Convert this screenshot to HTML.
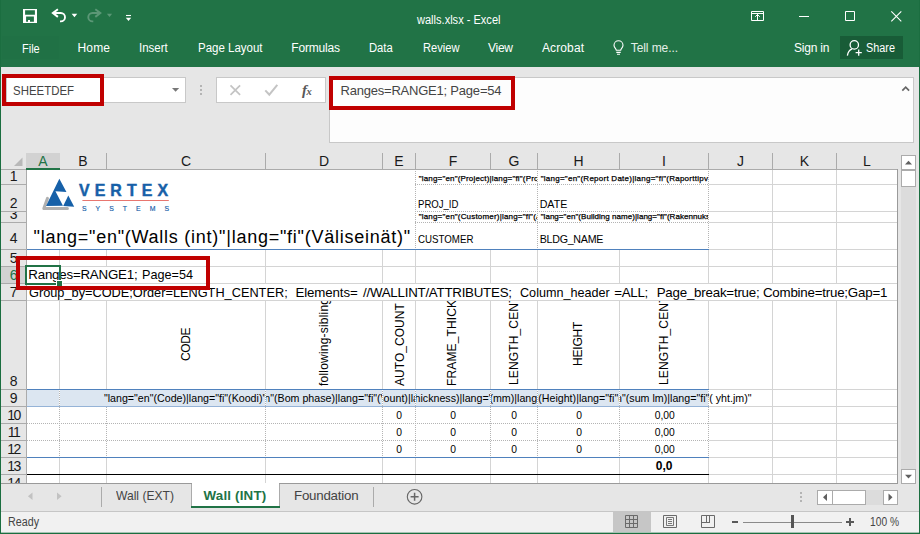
<!DOCTYPE html>
<html><head><meta charset="utf-8"><title>walls.xlsx - Excel</title>
<style>
html,body{margin:0;padding:0}
body{width:920px;height:534px;position:relative;overflow:hidden;background:#e6e6e6;font-family:"Liberation Sans",sans-serif}
.a{position:absolute;display:block}
.t{position:absolute;display:block;white-space:pre;line-height:20px}
</style></head><body>
<div class="a" style="left:0px;top:0px;width:920px;height:67px;background:#217346;"></div>
<svg class="a" style="left:0;top:0" width="160" height="34" viewBox="0 0 160 34" fill="none" stroke="#fff">
<path d="M23 9.100h14v13.800h-14z M25.100 10.200v4.600h9.800v-4.600z M26.100 16.400v5.300h1.900v-1.700h2v1.700h3.900v-5.300z" fill="#fff" fill-rule="evenodd" stroke="none"/>
<path d="M57.900 9.300 52.900 13l5 3.900" stroke-width="2" stroke-linejoin="miter"/>
<path d="M53.500 13h7.300a4.200 4.200 0 0 1 0 8.400h-.8" stroke-width="1.900"/>
<path d="M71.600 13.800h5.700l-2.850 3.500z" fill="#fff" stroke="none"/>
<g opacity=".26"><path d="M95.300 9.300l5 3.700-5 3.900" stroke-width="2"/><path d="M99.800 13h-7.300a4.200 4.200 0 0 0 0 8.400h.8" stroke-width="1.900"/>
<path d="M106.900 13.800h5.200l-2.600 3.300z" fill="#fff" stroke="none"/></g>
<path d="M126 15.500h5" stroke-width="1.100"/><path d="M125.800 17.700h5.400l-2.700 3.400z" fill="#fff" stroke="none"/>
</svg>
<span class="t" style="left:417.2px;top:9.74px;line-height:20px;font-size:12px;color:#fff;transform:scaleX(0.9208);transform-origin:0 0;">walls.xlsx - Excel</span>
<svg class="a" style="left:740px;top:0" width="180" height="34" viewBox="740 0 180 34" fill="none" stroke="#fff" stroke-width="1">
<path d="M751.5 11.5h12v9h-12z M751.5 13.5h12"/><path d="M757.5 20.5v-6.300 M755.2 16.800l2.300-2.300 2.300 2.300"/>
<path d="M799 16.5h10"/>
<path d="M845.5 11.5h9v9h-9z"/>
<path d="M891.3 11.3l10 10 M901.3 11.3l-10 10" stroke-width="1.1"/>
</svg>
<div class="a" style="left:2px;top:36px;width:57px;height:23px;background:#207145;"></div>
<span class="t" style="left:21.5px;top:38.84px;line-height:20px;font-size:12px;color:#fff;transform:scaleX(0.9180);transform-origin:0 0;">File</span>
<span class="t" style="left:77.5px;top:37.84px;line-height:20px;font-size:12px;color:#fff;letter-spacing:0.163px;">Home</span>
<span class="t" style="left:139.25px;top:37.84px;line-height:20px;font-size:12px;color:#fff;transform:scaleX(0.9580);transform-origin:0 0;">Insert</span>
<span class="t" style="left:197.5px;top:37.84px;line-height:20px;font-size:12px;color:#fff;transform:scaleX(0.9571);transform-origin:0 0;">Page Layout</span>
<span class="t" style="left:291.25px;top:37.84px;line-height:20px;font-size:12px;color:#fff;letter-spacing:-0.180px;">Formulas</span>
<span class="t" style="left:369.25px;top:37.84px;line-height:20px;font-size:12px;color:#fff;transform:scaleX(0.9370);transform-origin:0 0;">Data</span>
<span class="t" style="left:422.5px;top:37.84px;line-height:20px;font-size:12px;color:#fff;transform:scaleX(0.9277);transform-origin:0 0;">Review</span>
<span class="t" style="left:488px;top:37.84px;line-height:20px;font-size:12px;color:#fff;letter-spacing:-0.264px;">View</span>
<span class="t" style="left:542px;top:37.84px;line-height:20px;font-size:12px;color:#fff;letter-spacing:0.107px;">Acrobat</span>
<svg class="a" style="left:610px;top:38px" width="18" height="20" viewBox="610 38 18 20" fill="none" stroke="#fff" stroke-width="1.1">
<path d="M616.3 50.2c0-1.6-2.3-2.4-2.3-5a4.5 4.5 0 0 1 9 0c0 2.600-2.300 3.400-2.300 5z"/><path d="M616.300 52.400h4.400 M617 54.300h3"/></svg>
<span class="t" style="left:630.75px;top:37.84px;line-height:20px;font-size:12px;color:#e4efe8;letter-spacing:-0.079px;">Tell me...</span>
<span class="t" style="left:794px;top:37.84px;line-height:20px;font-size:12px;color:#fff;letter-spacing:-0.199px;">Sign in</span>
<div class="a" style="left:840px;top:36px;width:63px;height:23px;background:#185c37;"></div>
<svg class="a" style="left:844px;top:38px" width="20" height="20" viewBox="844 38 20 20" fill="none" stroke="#fff" stroke-width="1.3">
<circle cx="854.3" cy="44.9" r="4.2"/><path d="M847.4 55.700c.5-3.800 2.300-6 4.700-6.900"/><path d="M855.600 52.600h6.200 M858.700 49.500v6.200"/></svg>
<span class="t" style="left:866px;top:37.84px;line-height:20px;font-size:12px;color:#fff;transform:scaleX(0.9056);transform-origin:0 0;">Share</span>
<div class="a" style="left:6px;top:77px;width:180px;height:26px;background:#fff;border:1px solid #c8c8c8;box-sizing:border-box;"></div>
<span class="t" style="left:12.5px;top:81.34px;line-height:20px;font-size:12px;color:#444;transform:scaleX(0.9530);transform-origin:0 0;">SHEETDEF</span>
<svg class="a" style="left:170px;top:85px" width="12" height="10" viewBox="170 85 12 10"><path d="M172 88h7.200l-3.600 3.800z" fill="#777"/></svg>
<div class="a" style="left:200px;top:85px;width:2px;height:2px;background:#b4b4b4;"></div>
<div class="a" style="left:200px;top:89px;width:2px;height:2px;background:#b4b4b4;"></div>
<div class="a" style="left:200px;top:93px;width:2px;height:2px;background:#b4b4b4;"></div>
<div class="a" style="left:216px;top:77px;width:110px;height:26px;background:#fff;border:1px solid #c8c8c8;box-sizing:border-box;"></div>
<svg class="a" style="left:216px;top:77px" width="110" height="26" viewBox="216 77 110 26" fill="none">
<path d="M230.500 85.300l9.600 9.600 M240.100 85.300l-9.600 9.600" stroke="#c4c4c4" stroke-width="1.700"/>
<path d="M265.300 90.300l4 4.400 8-9.800" stroke="#c4c4c4" stroke-width="2"/>
<text x="302" y="95" font-family="Liberation Serif, serif" font-style="italic" font-weight="bold" font-size="15" fill="#585858">f<tspan font-size="10.500" dx="-.5" dy=".3">x</tspan></text>
</svg>
<div class="a" style="left:329px;top:77px;width:585px;height:66px;background:#fdfdfd;border:1px solid #c8c8c8;box-sizing:border-box;"></div>
<span class="t" style="left:340.5px;top:80.50px;line-height:20px;font-size:13px;color:#444;letter-spacing:-0.214px;">Ranges=RANGE1; Page=54</span>
<svg class="a" style="left:900px;top:83px" width="12" height="10" viewBox="900 83 12 10"><path d="M902.300 90.600l3.400-3.500 3.400 3.500" fill="none" stroke="#666" stroke-width="1.700"/></svg>
<div class="a" style="left:27px;top:170px;width:870px;height:313px;background:#fff;"></div>
<svg class="a" style="left:10px;top:155px" width="16" height="14" viewBox="10 155 16 14"><path d="M22.500 157.500v8.500h-8.500z" fill="#b8b8b8"/></svg>
<div class="a" style="left:26px;top:153px;width:34px;height:15px;background:#d2d2d2;"></div>
<div class="a" style="left:26px;top:168px;width:34px;height:2px;background:#217346;"></div>
<div class="a" style="left:106px;top:153px;width:1px;height:16px;background:#ababab;"></div>
<div class="a" style="left:265px;top:153px;width:1px;height:16px;background:#ababab;"></div>
<div class="a" style="left:382px;top:153px;width:1px;height:16px;background:#ababab;"></div>
<div class="a" style="left:415px;top:153px;width:1px;height:16px;background:#ababab;"></div>
<div class="a" style="left:490px;top:153px;width:1px;height:16px;background:#ababab;"></div>
<div class="a" style="left:537px;top:153px;width:1px;height:16px;background:#ababab;"></div>
<div class="a" style="left:619px;top:153px;width:1px;height:16px;background:#ababab;"></div>
<div class="a" style="left:708px;top:153px;width:1px;height:16px;background:#ababab;"></div>
<div class="a" style="left:772px;top:153px;width:1px;height:16px;background:#ababab;"></div>
<div class="a" style="left:836px;top:153px;width:1px;height:16px;background:#ababab;"></div>
<div class="a" style="left:897px;top:169px;width:1px;height:315px;background:#9a9a9a;"></div>
<div class="a" style="left:0px;top:483px;width:898px;height:1px;background:#9a9a9a;"></div>
<div class="a" style="left:60px;top:169px;width:837px;height:1px;background:#ababab;"></div>
<div class="a" style="left:1px;top:169px;width:25px;height:1px;background:#ababab;"></div>
<span class="t" style="left:38.33px;top:151.15px;line-height:20px;font-size:14px;color:#217346;">A</span>
<span class="t" style="left:78.33px;top:151.15px;line-height:20px;font-size:14px;color:#1a1a1a;">B</span>
<span class="t" style="left:180.94px;top:151.15px;line-height:20px;font-size:14px;color:#1a1a1a;">C</span>
<span class="t" style="left:318.94px;top:151.15px;line-height:20px;font-size:14px;color:#1a1a1a;">D</span>
<span class="t" style="left:394.33px;top:151.15px;line-height:20px;font-size:14px;color:#1a1a1a;">E</span>
<span class="t" style="left:448.72px;top:151.15px;line-height:20px;font-size:14px;color:#1a1a1a;">F</span>
<span class="t" style="left:508.56px;top:151.15px;line-height:20px;font-size:14px;color:#1a1a1a;">G</span>
<span class="t" style="left:573.44px;top:151.15px;line-height:20px;font-size:14px;color:#1a1a1a;">H</span>
<span class="t" style="left:662.06px;top:151.15px;line-height:20px;font-size:14px;color:#1a1a1a;">I</span>
<span class="t" style="left:737.0px;top:151.15px;line-height:20px;font-size:14px;color:#1a1a1a;">J</span>
<span class="t" style="left:799.83px;top:151.15px;line-height:20px;font-size:14px;color:#1a1a1a;">K</span>
<span class="t" style="left:863.11px;top:151.15px;line-height:20px;font-size:14px;color:#1a1a1a;">L</span>
<div class="a" style="left:26px;top:170px;width:1px;height:313px;background:#ababab;"></div>
<div class="a" style="left:1px;top:267px;width:25px;height:16px;background:#d2d2d2;"></div>
<div class="a" style="left:1px;top:184px;width:25px;height:1px;background:#ababab;"></div>
<div class="a" style="left:2px;top:170px;width:24px;height:14px;overflow:hidden"><span class="t" style="left:7.71px;top:-4.45px;line-height:20px;font-size:14px;color:#1a1a1a;">1</span></div>
<div class="a" style="left:1px;top:211px;width:25px;height:1px;background:#ababab;"></div>
<div class="a" style="left:2px;top:185px;width:24px;height:26px;overflow:hidden"><span class="t" style="left:7.71px;top:7.55px;line-height:20px;font-size:14px;color:#1a1a1a;">2</span></div>
<div class="a" style="left:1px;top:222px;width:25px;height:1px;background:#ababab;"></div>
<div class="a" style="left:2px;top:212px;width:24px;height:10px;overflow:hidden"><span class="t" style="left:7.71px;top:-8.45px;line-height:20px;font-size:14px;color:#1a1a1a;">3</span></div>
<div class="a" style="left:1px;top:249px;width:25px;height:1px;background:#ababab;"></div>
<div class="a" style="left:2px;top:223px;width:24px;height:26px;overflow:hidden"><span class="t" style="left:7.71px;top:4.95px;line-height:20px;font-size:14px;color:#1a1a1a;">4</span></div>
<div class="a" style="left:1px;top:266px;width:25px;height:1px;background:#ababab;"></div>
<div class="a" style="left:2px;top:250px;width:24px;height:16px;overflow:hidden"><span class="t" style="left:7.71px;top:-2.45px;line-height:20px;font-size:14px;color:#1a1a1a;">5</span></div>
<div class="a" style="left:1px;top:283px;width:25px;height:1px;background:#ababab;"></div>
<div class="a" style="left:2px;top:267px;width:24px;height:16px;overflow:hidden"><span class="t" style="left:7.71px;top:-2.45px;line-height:20px;font-size:14px;color:#217346;">6</span></div>
<div class="a" style="left:1px;top:300px;width:25px;height:1px;background:#ababab;"></div>
<div class="a" style="left:2px;top:284px;width:24px;height:16px;overflow:hidden"><span class="t" style="left:7.71px;top:-2.45px;line-height:20px;font-size:14px;color:#1a1a1a;">7</span></div>
<div class="a" style="left:1px;top:389px;width:25px;height:1px;background:#ababab;"></div>
<div class="a" style="left:2px;top:301px;width:24px;height:88px;overflow:hidden"><span class="t" style="left:7.71px;top:69.55px;line-height:20px;font-size:14px;color:#1a1a1a;">8</span></div>
<div class="a" style="left:1px;top:406px;width:25px;height:1px;background:#ababab;"></div>
<div class="a" style="left:2px;top:390px;width:24px;height:16px;overflow:hidden"><span class="t" style="left:7.71px;top:-2.45px;line-height:20px;font-size:14px;color:#1a1a1a;">9</span></div>
<div class="a" style="left:1px;top:423px;width:25px;height:1px;background:#ababab;"></div>
<div class="a" style="left:2px;top:407px;width:24px;height:16px;overflow:hidden"><span class="t" style="left:5.21px;top:-2.45px;line-height:20px;font-size:14px;color:#1a1a1a;letter-spacing:-1.5px;">10</span></div>
<div class="a" style="left:1px;top:440px;width:25px;height:1px;background:#ababab;"></div>
<div class="a" style="left:2px;top:424px;width:24px;height:16px;overflow:hidden"><span class="t" style="left:5.73px;top:-2.45px;line-height:20px;font-size:14px;color:#1a1a1a;letter-spacing:-1.5px;">11</span></div>
<div class="a" style="left:1px;top:457px;width:25px;height:1px;background:#ababab;"></div>
<div class="a" style="left:2px;top:441px;width:24px;height:16px;overflow:hidden"><span class="t" style="left:5.21px;top:-2.45px;line-height:20px;font-size:14px;color:#1a1a1a;letter-spacing:-1.5px;">12</span></div>
<div class="a" style="left:1px;top:474px;width:25px;height:1px;background:#ababab;"></div>
<div class="a" style="left:2px;top:458px;width:24px;height:16px;overflow:hidden"><span class="t" style="left:5.21px;top:-2.45px;line-height:20px;font-size:14px;color:#1a1a1a;letter-spacing:-1.5px;">13</span></div>
<div class="a" style="left:2px;top:475px;width:24px;height:8px;overflow:hidden"><span class="t" style="left:5.21px;top:-2.45px;line-height:20px;font-size:14px;color:#1a1a1a;letter-spacing:-1.5px;">14</span></div>
<div class="a" style="left:709px;top:184px;width:188px;height:1px;background:#d4d4d4;"></div>
<div class="a" style="left:709px;top:211px;width:188px;height:1px;background:#d4d4d4;"></div>
<div class="a" style="left:709px;top:222px;width:188px;height:1px;background:#d4d4d4;"></div>
<div class="a" style="left:709px;top:249px;width:188px;height:1px;background:#d4d4d4;"></div>
<div class="a" style="left:772px;top:170px;width:1px;height:80px;background:#d4d4d4;"></div>
<div class="a" style="left:836px;top:170px;width:1px;height:80px;background:#d4d4d4;"></div>
<div class="a" style="left:27px;top:266px;width:870px;height:1px;background:#d4d4d4;"></div>
<div class="a" style="left:59px;top:250px;width:1px;height:16px;background:#d4d4d4;"></div>
<div class="a" style="left:106px;top:250px;width:1px;height:16px;background:#d4d4d4;"></div>
<div class="a" style="left:265px;top:250px;width:1px;height:16px;background:#d4d4d4;"></div>
<div class="a" style="left:382px;top:250px;width:1px;height:16px;background:#d4d4d4;"></div>
<div class="a" style="left:415px;top:250px;width:1px;height:16px;background:#d4d4d4;"></div>
<div class="a" style="left:490px;top:250px;width:1px;height:16px;background:#d4d4d4;"></div>
<div class="a" style="left:537px;top:250px;width:1px;height:16px;background:#d4d4d4;"></div>
<div class="a" style="left:619px;top:250px;width:1px;height:16px;background:#d4d4d4;"></div>
<div class="a" style="left:708px;top:250px;width:1px;height:16px;background:#d4d4d4;"></div>
<div class="a" style="left:772px;top:250px;width:1px;height:16px;background:#d4d4d4;"></div>
<div class="a" style="left:836px;top:250px;width:1px;height:16px;background:#d4d4d4;"></div>
<div class="a" style="left:265px;top:267px;width:1px;height:16px;background:#d4d4d4;"></div>
<div class="a" style="left:382px;top:267px;width:1px;height:16px;background:#d4d4d4;"></div>
<div class="a" style="left:415px;top:267px;width:1px;height:16px;background:#d4d4d4;"></div>
<div class="a" style="left:490px;top:267px;width:1px;height:16px;background:#d4d4d4;"></div>
<div class="a" style="left:537px;top:267px;width:1px;height:16px;background:#d4d4d4;"></div>
<div class="a" style="left:619px;top:267px;width:1px;height:16px;background:#d4d4d4;"></div>
<div class="a" style="left:708px;top:267px;width:1px;height:16px;background:#d4d4d4;"></div>
<div class="a" style="left:772px;top:267px;width:1px;height:16px;background:#d4d4d4;"></div>
<div class="a" style="left:836px;top:267px;width:1px;height:16px;background:#d4d4d4;"></div>
<div class="a" style="left:27px;top:283px;width:870px;height:1px;background:#d4d4d4;"></div>
<div class="a" style="left:27px;top:300px;width:870px;height:1px;background:#d4d4d4;"></div>
<div class="a" style="left:59px;top:301px;width:1px;height:88px;background:#d4d4d4;"></div>
<div class="a" style="left:106px;top:301px;width:1px;height:88px;background:#d4d4d4;"></div>
<div class="a" style="left:265px;top:301px;width:1px;height:88px;background:#d4d4d4;"></div>
<div class="a" style="left:382px;top:301px;width:1px;height:88px;background:#d4d4d4;"></div>
<div class="a" style="left:415px;top:301px;width:1px;height:88px;background:#d4d4d4;"></div>
<div class="a" style="left:490px;top:301px;width:1px;height:88px;background:#d4d4d4;"></div>
<div class="a" style="left:537px;top:301px;width:1px;height:88px;background:#d4d4d4;"></div>
<div class="a" style="left:619px;top:301px;width:1px;height:88px;background:#d4d4d4;"></div>
<div class="a" style="left:708px;top:301px;width:1px;height:88px;background:#d4d4d4;"></div>
<div class="a" style="left:772px;top:301px;width:1px;height:88px;background:#d4d4d4;"></div>
<div class="a" style="left:836px;top:301px;width:1px;height:88px;background:#d4d4d4;"></div>
<div class="a" style="left:709px;top:389px;width:188px;height:1px;background:#d4d4d4;"></div>
<div class="a" style="left:709px;top:406px;width:188px;height:1px;background:#d4d4d4;"></div>
<div class="a" style="left:709px;top:423px;width:188px;height:1px;background:#d4d4d4;"></div>
<div class="a" style="left:709px;top:440px;width:188px;height:1px;background:#d4d4d4;"></div>
<div class="a" style="left:709px;top:457px;width:188px;height:1px;background:#d4d4d4;"></div>
<div class="a" style="left:709px;top:474px;width:188px;height:1px;background:#d4d4d4;"></div>
<div class="a" style="left:772px;top:390px;width:1px;height:93px;background:#d4d4d4;"></div>
<div class="a" style="left:836px;top:390px;width:1px;height:93px;background:#d4d4d4;"></div>
<div class="a" style="left:59px;top:458px;width:1px;height:25px;background:#d4d4d4;"></div>
<div class="a" style="left:106px;top:458px;width:1px;height:25px;background:#d4d4d4;"></div>
<div class="a" style="left:265px;top:458px;width:1px;height:25px;background:#d4d4d4;"></div>
<div class="a" style="left:382px;top:458px;width:1px;height:25px;background:#d4d4d4;"></div>
<div class="a" style="left:415px;top:458px;width:1px;height:25px;background:#d4d4d4;"></div>
<div class="a" style="left:490px;top:458px;width:1px;height:25px;background:#d4d4d4;"></div>
<div class="a" style="left:537px;top:458px;width:1px;height:25px;background:#d4d4d4;"></div>
<div class="a" style="left:619px;top:458px;width:1px;height:25px;background:#d4d4d4;"></div>
<div class="a" style="left:708px;top:458px;width:1px;height:25px;background:#d4d4d4;"></div>
<div class="a" style="left:415px;top:171px;width:1px;height:78px;background:repeating-linear-gradient(180deg,#b4b4b4 0 1px,transparent 1px 2px);"></div>
<div class="a" style="left:537px;top:171px;width:1px;height:78px;background:repeating-linear-gradient(180deg,#b4b4b4 0 1px,transparent 1px 2px);"></div>
<div class="a" style="left:708px;top:171px;width:1px;height:78px;background:repeating-linear-gradient(180deg,#b4b4b4 0 1px,transparent 1px 2px);"></div>
<div class="a" style="left:415px;top:184px;width:294px;height:1px;background:repeating-linear-gradient(90deg,#b4b4b4 0 1px,transparent 1px 2px);"></div>
<div class="a" style="left:415px;top:211px;width:294px;height:1px;background:repeating-linear-gradient(90deg,#b4b4b4 0 1px,transparent 1px 2px);"></div>
<div class="a" style="left:415px;top:222px;width:294px;height:1px;background:repeating-linear-gradient(90deg,#b4b4b4 0 1px,transparent 1px 2px);"></div>
<div class="a" style="left:27px;top:249px;width:682px;height:1px;background:#4f81bd;"></div>
<div class="a" style="left:27px;top:390px;width:682px;height:16px;background:#dce6f1;"></div>
<div class="a" style="left:27px;top:389px;width:682px;height:1px;background:#4f81bd;"></div>
<div class="a" style="left:27px;top:406px;width:682px;height:1px;background:#95b3d7;"></div>
<div class="a" style="left:27px;top:457px;width:682px;height:1px;background:#4f81bd;"></div>
<div class="a" style="left:27px;top:474px;width:682px;height:1px;background:#000;"></div>
<div class="a" style="left:27px;top:423px;width:682px;height:1px;background:repeating-linear-gradient(90deg,#b4b4b4 0 1px,transparent 1px 2px);"></div>
<div class="a" style="left:27px;top:440px;width:682px;height:1px;background:repeating-linear-gradient(90deg,#b4b4b4 0 1px,transparent 1px 2px);"></div>
<div class="a" style="left:59px;top:390px;width:1px;height:16px;background:#fff;"></div>
<div class="a" style="left:59px;top:391px;width:1px;height:66px;background:repeating-linear-gradient(180deg,#b4b4b4 0 1px,transparent 1px 2px);"></div>
<div class="a" style="left:106px;top:407px;width:1px;height:50px;background:repeating-linear-gradient(180deg,#b4b4b4 0 1px,transparent 1px 2px);"></div>
<div class="a" style="left:265px;top:390px;width:1px;height:16px;background:#fff;"></div>
<div class="a" style="left:265px;top:391px;width:1px;height:66px;background:repeating-linear-gradient(180deg,#b4b4b4 0 1px,transparent 1px 2px);"></div>
<div class="a" style="left:382px;top:390px;width:1px;height:16px;background:#fff;"></div>
<div class="a" style="left:382px;top:391px;width:1px;height:66px;background:repeating-linear-gradient(180deg,#b4b4b4 0 1px,transparent 1px 2px);"></div>
<div class="a" style="left:415px;top:390px;width:1px;height:16px;background:#fff;"></div>
<div class="a" style="left:415px;top:391px;width:1px;height:66px;background:repeating-linear-gradient(180deg,#b4b4b4 0 1px,transparent 1px 2px);"></div>
<div class="a" style="left:490px;top:390px;width:1px;height:16px;background:#fff;"></div>
<div class="a" style="left:490px;top:391px;width:1px;height:66px;background:repeating-linear-gradient(180deg,#b4b4b4 0 1px,transparent 1px 2px);"></div>
<div class="a" style="left:537px;top:390px;width:1px;height:16px;background:#fff;"></div>
<div class="a" style="left:537px;top:391px;width:1px;height:66px;background:repeating-linear-gradient(180deg,#b4b4b4 0 1px,transparent 1px 2px);"></div>
<div class="a" style="left:619px;top:390px;width:1px;height:16px;background:#fff;"></div>
<div class="a" style="left:619px;top:391px;width:1px;height:66px;background:repeating-linear-gradient(180deg,#b4b4b4 0 1px,transparent 1px 2px);"></div>
<div class="a" style="left:708px;top:390px;width:1px;height:16px;background:#fff;"></div>
<div class="a" style="left:708px;top:391px;width:1px;height:66px;background:repeating-linear-gradient(180deg,#b4b4b4 0 1px,transparent 1px 2px);"></div>
<svg class="a" style="left:36px;top:172px" width="140" height="46" viewBox="36 172 140 46">
<path d="M47.500 198.300l-3.700 10.300h23.600" fill="none" stroke="#b0b0b0" stroke-width="3" stroke-linecap="round" stroke-linejoin="round"/>
<path d="M59.350 178.700l7.100 13.300-11-.8 7.500 14.500-16.900.3z" fill="#1660a8"/>
<path d="M68.300 195.500l5.900 11.300-11-.9z" fill="#1660a8"/>
<text x="79" y="195.600" font-family="Liberation Sans, sans-serif" font-weight="bold" font-size="15.900" fill="#1660a8" stroke="#1660a8" stroke-width=".45" textLength="89" lengthAdjust="spacing">VERTEX</text>
<path d="M82.400 200.500h86.400" stroke="#e8766f" stroke-width="1"/>
<text x="82" y="210.800" font-family="Liberation Sans, sans-serif" font-size="6.900" fill="#1660a8" stroke="#1660a8" stroke-width=".15" textLength="87" lengthAdjust="spacing">SYSTEMS</text>
</svg>
<div class="a" style="left:416px;top:170px;width:121px;height:14px;overflow:hidden"><span class="t" style="left:2.6999999999999886px;top:-1.07px;line-height:20px;font-size:8px;color:#000;letter-spacing:0.176px;-webkit-text-stroke:.25px #000;">"lang="en"(Project)|lang="fi"(Projekti)"</span></div>
<div class="a" style="left:538px;top:170px;width:170px;height:14px;overflow:hidden"><span class="t" style="left:2.7000000000000455px;top:-1.07px;line-height:20px;font-size:8px;color:#000;letter-spacing:0.253px;-webkit-text-stroke:.25px #000;">"lang="en"(Report Date)|lang="fi"(Raporttipvm)"</span></div>
<div class="a" style="left:416px;top:212px;width:121px;height:10px;overflow:hidden"><span class="t" style="left:2.6999999999999886px;top:-5.07px;line-height:20px;font-size:8px;color:#000;letter-spacing:0.189px;-webkit-text-stroke:.25px #000;">"lang="en"(Customer)|lang="fi"(Asiakas)"</span></div>
<div class="a" style="left:538px;top:212px;width:170px;height:10px;overflow:hidden"><span class="t" style="left:2.7000000000000455px;top:-5.07px;line-height:20px;font-size:8px;color:#000;letter-spacing:0.041px;-webkit-text-stroke:.25px #000;">"lang="en"(Building name)|lang="fi"(Rakennuksen nimi)"</span></div>
<span class="t" style="left:417.8px;top:193.90px;line-height:20px;font-size:10.67px;color:#000;transform:scaleX(0.8988);transform-origin:0 0;">PROJ_ID</span>
<span class="t" style="left:539.7px;top:193.90px;line-height:20px;font-size:10.67px;color:#000;letter-spacing:-0.022px;">DATE</span>
<span class="t" style="left:417.8px;top:229.10px;line-height:20px;font-size:10.67px;color:#000;transform:scaleX(0.9119);transform-origin:0 0;">CUSTOMER</span>
<span class="t" style="left:539.7px;top:229.10px;line-height:20px;font-size:10.67px;color:#000;letter-spacing:-0.252px;">BLDG_NAME</span>
<span class="t" style="left:33.6px;top:226.56px;line-height:20px;font-size:18px;color:#000;letter-spacing:0.747px;">"lang="en"(Walls (int)"|lang="fi"(Väliseinät)"</span>
<span class="t" style="left:28.3px;top:264.88px;line-height:20px;font-size:13.33px;color:#000;letter-spacing:-0.224px;">Ranges=RANGE1;</span>
<span class="t" style="left:142.4px;top:264.88px;line-height:20px;font-size:13.33px;color:#000;transform:scaleX(0.9490);transform-origin:0 0;">Page=54</span>
<span class="t" style="left:28.7px;top:283.18px;line-height:20px;font-size:13.33px;color:#000;transform:scaleX(0.9568);transform-origin:0 0;">Group_by=CODE;Order=LENGTH_CENTER;</span>
<span class="t" style="left:295.5px;top:283.18px;line-height:20px;font-size:13.33px;color:#000;letter-spacing:-0.144px;">Elements=</span>
<span class="t" style="left:363px;top:283.18px;line-height:20px;font-size:13.33px;color:#000;letter-spacing:-0.253px;">//WALLINT/ATTRIBUTES;</span>
<span class="t" style="left:520px;top:283.18px;line-height:20px;font-size:13.33px;color:#000;transform:scaleX(0.9467);transform-origin:0 0;">Column_header</span>
<span class="t" style="left:614.3px;top:283.18px;line-height:20px;font-size:13.33px;color:#000;letter-spacing:-0.302px;">=ALL;</span>
<span class="t" style="left:656.7px;top:283.18px;line-height:20px;font-size:13.33px;color:#000;letter-spacing:-0.222px;">Page_break=true; Combine=true;Gap=1</span>
<div class="a" style="left:107px;top:301px;width:158px;height:88px;overflow:hidden"><span class="t" style="left:72.34px;top:60.30px;line-height:14px;font-size:12px;transform-origin:0 0;transform:rotate(-90deg);letter-spacing:-0.390px;">CODE</span></div>
<div class="a" style="left:266px;top:301px;width:116px;height:88px;overflow:hidden"><span class="t" style="left:51.24px;top:84.60px;line-height:14px;font-size:12px;transform-origin:0 0;transform:rotate(-90deg);letter-spacing:0.206px;">following-sibling::*</span></div>
<div class="a" style="left:383px;top:301px;width:32px;height:88px;overflow:hidden"><span class="t" style="left:9.54px;top:84.60px;line-height:14px;font-size:12px;transform-origin:0 0;transform:rotate(-90deg);letter-spacing:0.038px;">AUTO_COUNT</span></div>
<div class="a" style="left:416px;top:301px;width:74px;height:88px;overflow:hidden"><span class="t" style="left:29.44px;top:84.60px;line-height:14px;font-size:12px;transform-origin:0 0;transform:rotate(-90deg);letter-spacing:0.133px;">FRAME_THICKNESS</span></div>
<div class="a" style="left:491px;top:301px;width:46px;height:88px;overflow:hidden"><span class="t" style="left:16.44px;top:84.00px;line-height:14px;font-size:12px;transform-origin:0 0;transform:rotate(-90deg);letter-spacing:0.146px;">LENGTH_CENTER</span></div>
<div class="a" style="left:538px;top:301px;width:81px;height:88px;overflow:hidden"><span class="t" style="left:32.54px;top:65.30px;line-height:14px;font-size:12px;transform-origin:0 0;transform:rotate(-90deg);letter-spacing:-0.207px;">HEIGHT</span></div>
<div class="a" style="left:620px;top:301px;width:88px;height:88px;overflow:hidden"><span class="t" style="left:36.64px;top:84.00px;line-height:14px;font-size:12px;transform-origin:0 0;transform:rotate(-90deg);letter-spacing:0.146px;">LENGTH_CENTER</span></div>
<div class="a" style="left:61px;top:390px;width:204px;height:16px;overflow:hidden"><span class="t" style="left:42.94px;top:-1.90px;line-height:20px;font-size:10.67px;color:#000;">"lang="en"(Code)|lang="fi"(Koodi)"</span></div>
<div class="a" style="left:266px;top:390px;width:116px;height:16px;overflow:hidden"><span class="t" style="left:-41.55px;top:-1.90px;line-height:20px;font-size:10.67px;color:#000;">"lang="en"(Bom phase)|lang="fi"(Vaiheet)"</span></div>
<div class="a" style="left:383px;top:390px;width:32px;height:16px;overflow:hidden"><span class="t" style="left:-60.21px;top:-1.90px;line-height:20px;font-size:10.67px;color:#000;">"lang="en"(Count)|lang="fi"(Kpl)"</span></div>
<div class="a" style="left:416px;top:390px;width:74px;height:16px;overflow:hidden"><span class="t" style="left:-61.14px;top:-1.90px;line-height:20px;font-size:10.67px;color:#000;">"lang="en"(Thickness)|lang="fi"(Paksuus)"</span></div>
<div class="a" style="left:491px;top:390px;width:46px;height:16px;overflow:hidden"><span class="t" style="left:-51.14px;top:-1.90px;line-height:20px;font-size:10.67px;color:#000;">"lang="en"(mm)|lang="fi"(mm)"</span></div>
<div class="a" style="left:538px;top:390px;width:81px;height:16px;overflow:hidden"><span class="t" style="left:-49.35px;top:-1.90px;line-height:20px;font-size:10.67px;color:#000;">"lang="en"(Height)|lang="fi"(Korkeus)"</span></div>
<div class="a" style="left:620px;top:390px;width:151px;height:16px;overflow:hidden"><span class="t" style="left:-43.76px;top:-1.90px;line-height:20px;font-size:10.67px;color:#000;">"lang="en"(sum lm)|lang="fi"( yht.jm)"</span></div>
<span class="t" style="left:396.14px;top:406.03px;line-height:20px;font-size:10.3px;color:#000;">0</span>
<span class="t" style="left:450.14px;top:406.03px;line-height:20px;font-size:10.3px;color:#000;">0</span>
<span class="t" style="left:511.14px;top:406.03px;line-height:20px;font-size:10.3px;color:#000;">0</span>
<span class="t" style="left:576.14px;top:406.03px;line-height:20px;font-size:10.3px;color:#000;">0</span>
<span class="t" style="left:654.68px;top:406.03px;line-height:20px;font-size:10.3px;color:#000;">0,00</span>
<span class="t" style="left:396.14px;top:423.03px;line-height:20px;font-size:10.3px;color:#000;">0</span>
<span class="t" style="left:450.14px;top:423.03px;line-height:20px;font-size:10.3px;color:#000;">0</span>
<span class="t" style="left:511.14px;top:423.03px;line-height:20px;font-size:10.3px;color:#000;">0</span>
<span class="t" style="left:576.14px;top:423.03px;line-height:20px;font-size:10.3px;color:#000;">0</span>
<span class="t" style="left:654.68px;top:423.03px;line-height:20px;font-size:10.3px;color:#000;">0,00</span>
<span class="t" style="left:396.14px;top:440.03px;line-height:20px;font-size:10.3px;color:#000;">0</span>
<span class="t" style="left:450.14px;top:440.03px;line-height:20px;font-size:10.3px;color:#000;">0</span>
<span class="t" style="left:511.14px;top:440.03px;line-height:20px;font-size:10.3px;color:#000;">0</span>
<span class="t" style="left:576.14px;top:440.03px;line-height:20px;font-size:10.3px;color:#000;">0</span>
<span class="t" style="left:654.68px;top:440.03px;line-height:20px;font-size:10.3px;color:#000;">0,00</span>
<span class="t" style="left:655.86px;top:455.54px;line-height:20px;font-size:12px;color:#000;font-weight:bold;">0,0</span>
<div class="a" style="left:25px;top:265px;width:36px;height:20px;border:2px solid #217346;box-sizing:border-box;"></div>
<div class="a" style="left:56px;top:280px;width:7px;height:7px;background:#fff;"></div>
<div class="a" style="left:57px;top:281px;width:5px;height:5px;background:#217346;"></div>
<div class="a" style="left:901px;top:170px;width:15px;height:300px;background:#dcdcdc;"></div>
<div class="a" style="left:901px;top:155px;width:15px;height:15px;background:#fff;border:1px solid #ababab;box-sizing:border-box;"></div>
<svg class="a" style="left:901px;top:155px" width="15" height="15" viewBox="0 0 15 15"><path d="M4 9.500h7l-3.500-3.800z" fill="#606060"/></svg>
<div class="a" style="left:901px;top:170px;width:15px;height:17px;background:#fff;border:1px solid #ababab;box-sizing:border-box;"></div>
<div class="a" style="left:901px;top:469px;width:15px;height:15px;background:#fff;border:1px solid #ababab;box-sizing:border-box;"></div>
<svg class="a" style="left:901px;top:469px" width="15" height="15" viewBox="0 0 15 15"><path d="M4 5.800h7l-3.500 3.800z" fill="#606060"/></svg>
<svg class="a" style="left:20px;top:488px" width="50" height="18" viewBox="20 488 50 18"><path d="M32.500 492.500v7.400l-4.600-3.700z M57 492.500v7.400l4.600-3.700z" fill="#c2c2c2"/></svg>
<div class="a" style="left:101px;top:487px;width:1px;height:20px;background:#ababab;"></div>
<span class="t" style="left:116px;top:486.38px;line-height:20px;font-size:13.33px;color:#444;transform:scaleX(0.9072);transform-origin:0 0;">Wall (EXT)</span>
<div class="a" style="left:192px;top:483px;width:87px;height:23px;background:#fff;"></div>
<div class="a" style="left:191px;top:484px;width:1px;height:22px;background:#ababab;"></div>
<div class="a" style="left:279px;top:484px;width:1px;height:22px;background:#ababab;"></div>
<div class="a" style="left:191px;top:506px;width:89px;height:2px;background:#217346;"></div>
<span class="t" style="left:203.5px;top:485.68px;line-height:20px;font-size:13.33px;color:#217346;font-weight:bold;letter-spacing:0.193px;">Wall (INT)</span>
<span class="t" style="left:294px;top:486.38px;line-height:20px;font-size:13.33px;color:#444;letter-spacing:-0.234px;">Foundation</span>
<div class="a" style="left:373px;top:487px;width:1px;height:20px;background:#ababab;"></div>
<svg class="a" style="left:405px;top:487px" width="20" height="20" viewBox="405 487 20 20" fill="none" stroke="#666"><circle cx="414.600" cy="496.800" r="7.300" stroke-width="1.100"/><path d="M410.600 496.800h8 M414.600 492.800v8" stroke-width="1.500"/></svg>
<div class="a" style="left:800px;top:492px;width:2px;height:2px;background:#b4b4b4;"></div>
<div class="a" style="left:800px;top:496px;width:2px;height:2px;background:#b4b4b4;"></div>
<div class="a" style="left:800px;top:500px;width:2px;height:2px;background:#b4b4b4;"></div>
<div class="a" style="left:832px;top:490px;width:52px;height:15px;background:#dcdcdc;"></div>
<div class="a" style="left:817px;top:490px;width:16px;height:15px;background:#fff;border:1px solid #ababab;box-sizing:border-box;"></div>
<div class="a" style="left:832px;top:490px;width:34px;height:15px;background:#fff;border:1px solid #ababab;box-sizing:border-box;"></div>
<div class="a" style="left:883px;top:490px;width:15px;height:15px;background:#fff;border:1px solid #ababab;box-sizing:border-box;"></div>
<svg class="a" style="left:817px;top:490px" width="81" height="15" viewBox="817 490 81 15"><path d="M827 493.500v7.400l-4-3.700z M888.500 493.500v7.400l4-3.700z" fill="#606060"/></svg>
<div class="a" style="left:0px;top:511px;width:920px;height:1px;background:#c6c6c6;"></div>
<div class="a" style="left:0px;top:512px;width:920px;height:22px;background:#f1f1f1;"></div>
<span class="t" style="left:8px;top:511.84px;line-height:20px;font-size:12px;color:#444;transform:scaleX(0.8937);transform-origin:0 0;">Ready</span>
<div class="a" style="left:613px;top:512px;width:38px;height:20px;background:#c6c6c6;"></div>
<svg class="a" style="left:613px;top:512px" width="110" height="20" viewBox="613 512 110 20" fill="none" stroke="#6a6a6a" stroke-width="1">
<path d="M625.500 515.500h12v12h-12z M625.500 519.500h12 M625.500 523.500h12 M629.500 515.500v12 M633.500 515.500v12"/>
<path d="M663.500 515.500h13v12h-13z"/><path d="M666.500 517.500h7v8h-7z M668 519.500h4 M668 521.500h4 M668 523.500h4" stroke-width=".9"/>
<path d="M701.500 515.500h13v12h-13z"/><path d="M706.500 515.500v7 M709.500 515.500v7.500 M701.500 522.500h8.500"/>
</svg>
<div class="a" style="left:732px;top:521px;width:6px;height:2px;background:#595959;"></div>
<div class="a" style="left:743px;top:521.5px;width:99px;height:1px;background:#8a8a8a;"></div>
<div class="a" style="left:790.5px;top:515px;width:3.5px;height:12.5px;background:#555;"></div>
<div class="a" style="left:846px;top:521px;width:8px;height:2px;background:#595959;"></div>
<div class="a" style="left:849px;top:518px;width:2px;height:8px;background:#595959;"></div>
<span class="t" style="left:869.5px;top:512.14px;line-height:20px;font-size:12px;color:#444;transform:scaleX(0.8523);transform-origin:0 0;">100 %</span>
<div class="a" style="left:2px;top:74px;width:102px;height:32px;border:4px solid #c00000;box-sizing:border-box;"></div>
<div class="a" style="left:329px;top:76px;width:186px;height:34px;border:4px solid #c00000;box-sizing:border-box;"></div>
<div class="a" style="left:16px;top:256px;width:194px;height:34px;border:4px solid #c00000;box-sizing:border-box;"></div>
<div class="a" style="left:0px;top:0px;width:1px;height:534px;background:#1b6e40;"></div>
<div class="a" style="left:919px;top:0px;width:1px;height:534px;background:#1b6e40;"></div>
<div class="a" style="left:0px;top:533px;width:920px;height:1px;background:#1b6e40;"></div>
<div class="a" style="left:0px;top:532px;width:920px;height:1px;background:rgba(27,110,64,.35);"></div>
</body></html>
